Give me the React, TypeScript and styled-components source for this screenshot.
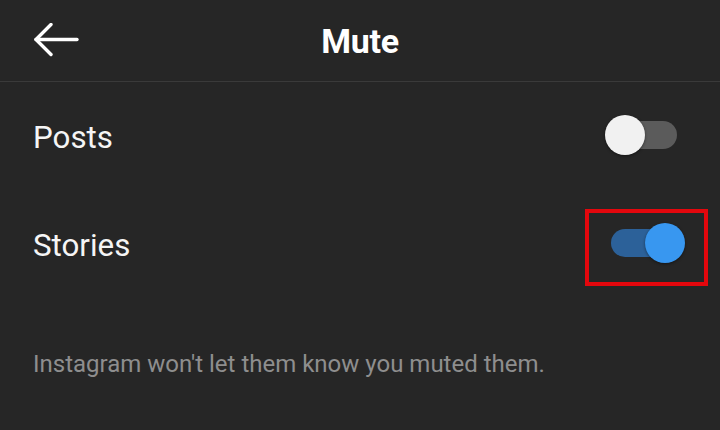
import React, { useState } from 'react'
import styled, { createGlobalStyle } from 'styled-components'

const GlobalStyle = createGlobalStyle`
  html, body {
    margin: 0;
    padding: 0;
    background: #262626;
  }
  body {
    font-family: Roboto, "Liberation Sans", sans-serif;
    color: #fafafa;
  }
`

const Screen = styled.div`
  width: 720px;
  height: 430px;
  background: #262626;
  overflow: hidden;
`

const Header = styled.header`
  height: 81px;
  border-bottom: 1px solid #3a3a3a;
  display: grid;
  grid-template-columns: 110px 1fr 110px;
  align-items: center;
`

const BackButton = styled.button`
  background: transparent;
  border: 0;
  padding: 0 0 0 33px;
  height: 100%;
  display: flex;
  align-items: center;
  cursor: pointer;
  svg {
    width: 46px;
    height: 36px;
  }
`

const Title = styled.h1`
  margin: 0;
  text-align: center;
  font-size: 34px;
  font-weight: 700;
  letter-spacing: -0.3px;
  color: #ffffff;
`

const List = styled.div`
  display: flex;
  flex-direction: column;
  padding-top: 1px;
`

const Row = styled.div`
  height: 108px;
  display: flex;
  align-items: center;
  justify-content: space-between;
  padding: 0 35px 0 33px;
`

const Label = styled.span`
  font-size: 31.3px;
  font-weight: 400;
  color: #f5f5f5;
`

const SwitchWrap = styled.div`
  position: relative;
`

const Highlight = styled.div`
  position: absolute;
  top: -14px;
  left: -20px;
  right: -23px;
  bottom: -19px;
  border: 4px solid #e3070d;
  pointer-events: none;
`

const Switch = styled.button<{ $on: boolean }>`
  position: relative;
  width: 80px;
  height: 40px;
  padding: 0;
  border: 0;
  background: transparent;
  cursor: pointer;
`

const Track = styled.span<{ $on: boolean }>`
  position: absolute;
  left: 6px;
  right: 8px;
  top: 6px;
  height: 28px;
  border-radius: 14px;
  background: ${p => (p.$on ? '#2c6199' : '#5b5b5b')};
`

const Knob = styled.span<{ $on: boolean }>`
  position: absolute;
  top: 0;
  left: ${p => (p.$on ? '40px' : '0')};
  width: 40px;
  height: 40px;
  border-radius: 50%;
  background: ${p => (p.$on ? '#3897f0' : '#f1f1f1')};
  box-shadow: 0 1px 3px rgba(0, 0, 0, 0.45);
`

const Note = styled.p`
  margin: 51px 0 0 0;
  padding: 0 33px;
  font-size: 24px;
  line-height: 28px;
  color: #8e8e8e;
`

type ToggleProps = {
  on: boolean,
  onChange: () => void
}

const Toggle = ({ on, onChange }: ToggleProps) => (
  <Switch $on={on} onClick={onChange} role='switch' aria-checked={on}>
    <Track $on={on} />
    <Knob $on={on} />
  </Switch>
)

export default function App() {
  const [posts, setPosts] = useState(false)
  const [stories, setStories] = useState(true)

  return (
    <>
      <GlobalStyle />
      <Screen>
        <Header>
          <BackButton aria-label='Back'>
            <svg viewBox='0 0 46 36' fill='none' stroke='#ffffff' strokeWidth='3.4' strokeLinecap='round' strokeLinejoin='round'>
              <path d='M3 16.5h41' />
              <path d='M18 1.5L3 16.5l15 15' />
            </svg>
          </BackButton>
          <Title>Mute</Title>
          <span />
        </Header>
        <List>
          <Row>
            <Label>Posts</Label>
            <SwitchWrap>
              <Toggle on={posts} onChange={() => setPosts(!posts)} />
            </SwitchWrap>
          </Row>
          <Row>
            <Label>Stories</Label>
            <SwitchWrap>
              <Toggle on={stories} onChange={() => setStories(!stories)} />
              <Highlight />
            </SwitchWrap>
          </Row>
        </List>
        <Note>Instagram won't let them know you muted them.</Note>
      </Screen>
    </>
  )
}
